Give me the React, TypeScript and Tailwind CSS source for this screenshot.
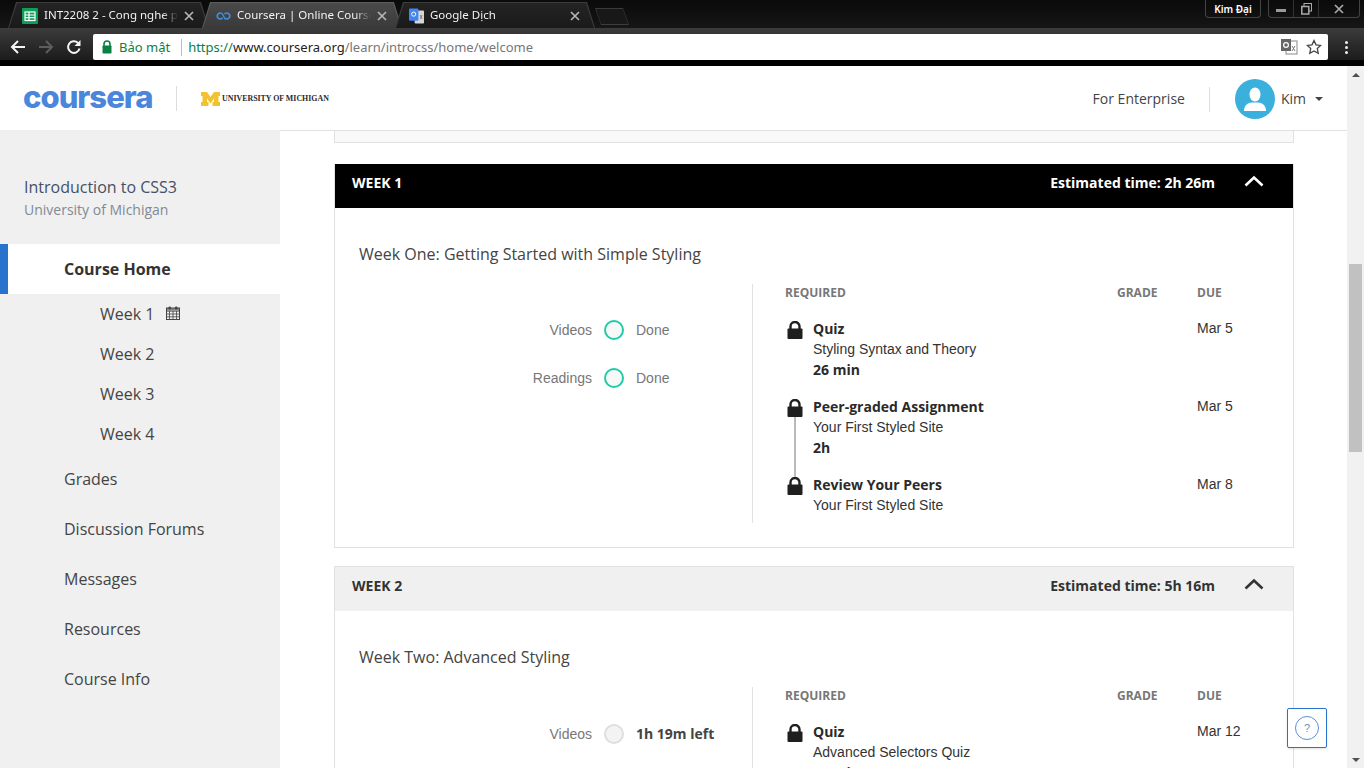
import React from "react";

const OPEN = "font-['Open_Sans',sans-serif]";
const ARIAL = "font-['Liberation_Sans',sans-serif]";

function Lock() {
  return (
    <svg width="16" height="18" viewBox="0 0 16 18" className="block">
      <path d="M3.500 8V5.500a4.500 4.500 0 0 1 9 0V8" fill="none" stroke="#1f1f1f" strokeWidth="2.4" />
      <rect x="0.5" y="7.500" width="15" height="10.500" rx="1" fill="#1f1f1f" />
    </svg>
  );
}

function Chevron({ color }: { color: string }) {
  return (
    <svg width="20" height="12" viewBox="0 0 20 12" className="block">
      <path d="M1.500 10.500 L10 2.500 L18.500 10.500" fill="none" stroke={color} strokeWidth="2.6" />
    </svg>
  );
}

function Calendar() {
  return (
    <svg width="14" height="14" viewBox="0 0 14 14" className="block">
      <rect x="0.5" y="2" width="13" height="11.500" fill="none" stroke="#444" />
      <path d="M0.500 5.200H13.500M0.500 8H13.500M0.500 10.800H13.500M3.500 5V13.500M7 5V13.500M10.500 5V13.500" stroke="#444" strokeWidth="0.8" />
      <rect x="2.500" y="0.500" width="2.400" height="3" rx="1" fill="#444" />
      <rect x="9" y="0.500" width="2.400" height="3" rx="1" fill="#444" />
      <rect x="0.500" y="2" width="13" height="2.600" fill="#444" opacity="0.6" />
    </svg>
  );
}

function CloseX({ color = "#b5b5b5" }: { color?: string }) {
  return (
    <svg width="10" height="10" viewBox="0 0 10 10" className="block shrink-0">
      <path d="M1 1L9 9M9 1L1 9" stroke={color} strokeWidth="1.7" />
    </svg>
  );
}

function SheetsIcon() {
  return (
    <svg width="16" height="16" viewBox="0 0 16 16" className="block shrink-0">
      <rect width="16" height="16" rx="1" fill="#0f9d58" />
      <rect x="3" y="4" width="10" height="8.500" fill="none" stroke="#fff" strokeWidth="1.2" />
      <path d="M3 7H13M3 9.700H13M7 4V12.500" stroke="#fff" strokeWidth="1.2" />
    </svg>
  );
}

function InfinityIcon() {
  return (
    <svg width="15" height="10" viewBox="0 0 16 10" className="block shrink-0">
      <path d="M7 3a3.200 3.200 0 1 0 0 4M9 7a3.200 3.200 0 1 0 0-4" fill="none" stroke="#3f8fdc" strokeWidth="1.8" />
      <path d="M7 3 L9 7" stroke="#3f8fdc" strokeWidth="1.5" />
    </svg>
  );
}

function TranslateIcon({ small }: { small?: boolean }) {
  if (small) {
    return (
      <svg width="18" height="18" viewBox="0 0 18 18" className="block">
        <rect x="6" y="3" width="11" height="13" fill="#fff" stroke="#888" />
        <rect x="1" y="1" width="10" height="12" fill="#666" />
        <circle cx="6" cy="7" r="2.400" fill="none" stroke="#fff" strokeWidth="1.2" />
        <path d="M12 8l3 5M15 8l-3 5" stroke="#777" strokeWidth="1" />
      </svg>
    );
  }
  return (
    <svg width="15" height="16" viewBox="0 0 16 16" className="block shrink-0">
      <rect x="6" y="2" width="10" height="14" rx="1" fill="#d6d6d6" />
      <rect x="0" y="0" width="10" height="13" rx="1" fill="#4285f4" />
      <circle cx="5" cy="6" r="2.200" fill="none" stroke="#fff" strokeWidth="1" />
      <path d="M12 7l2 4M14 7l-2 4" stroke="#777" strokeWidth="1" />
    </svg>
  );
}

function Tab({
  icon,
  label,
  active,
  width,
}: {
  icon: React.ReactNode;
  label: string;
  active?: boolean;
  width: string;
}) {
  return (
    <div
      className={`-mr-[7px] h-[26px] shrink-0 ${width} ${
        active ? "bg-[#5a5a5a]" : "bg-[#3c3c3c]"
      } [clip-path:polygon(0_100%,8px_0,calc(100%-8px)_0,100%_100%)] pt-px`}
    >
      <div
        className={`flex h-full items-center gap-[6px] pl-[14px] pr-[15px] ${
          active ? "bg-gradient-to-b from-[#4a4a4a] to-[#3a3a3a]" : "bg-gradient-to-b from-[#242424] to-[#1a1a1a]"
        } [clip-path:polygon(1px_100%,9px_0,calc(100%-9px)_0,calc(100%-1px)_100%)]`}
      >
        {icon}
        <span className="-mt-[2px] min-w-0 flex-1 overflow-hidden whitespace-nowrap font-['Noto_Sans',sans-serif] text-[11.5px] leading-[16px] text-[#f2f2f2] [mask-image:linear-gradient(to_right,black_88%,transparent)]">
          {label}
        </span>
        <CloseX />
      </div>
    </div>
  );
}

function BrowserChrome() {
  return (
    <div className="shrink-0 bg-black">
      <div className="flex h-[28px] items-end bg-gradient-to-b from-[#0a0a0a] to-[#161616] pl-[8px]">
        <div className="flex items-end">
          <Tab width="w-[201px]" icon={<SheetsIcon />} label="INT2208 2 - Cong nghe p" />
          <Tab width="w-[200px]" icon={<InfinityIcon />} label="Coursera | Online Course" active />
          <Tab width="w-[200px]" icon={<TranslateIcon />} label="Google Dịch" />
          <div className="ml-[7px] mb-[3px] h-[17px] w-[34px] bg-[#3c3c3c] [clip-path:polygon(6px_100%,0_0,calc(100%-6px)_0,100%_100%)] p-px">
            <div className="h-full w-full bg-[#181818] [clip-path:polygon(5px_100%,0_0,calc(100%-5px)_0,100%_100%)]" />
          </div>
        </div>
        <div className="ml-auto flex items-start self-start pr-[4px]">
          <div className="flex h-[18px] w-[56px] items-center justify-center rounded-b-[4px] border-x border-b border-[#444] font-['Noto_Sans',sans-serif] text-[10px] font-semibold leading-none text-white">
            Kim Đại
          </div>
          <div className="ml-[7px] flex h-[18px] w-[92px] items-center rounded-b-[4px] border-x border-b border-[#444] text-[#aaa]">
            <div className="flex h-full w-[25px] items-center justify-center border-r border-[#333]">
              <div className="mt-[4px] h-[3px] w-[10px] bg-[#999]" />
            </div>
            <div className="flex h-full w-[25px] items-center justify-center border-r border-[#333]">
              <svg width="11" height="12" viewBox="0 0 11 12" className="block">
                <rect x="3" y="0.500" width="7.500" height="7.500" fill="none" stroke="#aaa" />
                <rect x="0.800" y="3.500" width="7" height="7.500" fill="#111" stroke="#aaa" strokeWidth="1.5" />
              </svg>
            </div>
            <div className="flex h-full flex-1 items-center justify-center">
              <CloseX color="#aaa" />
            </div>
          </div>
        </div>
      </div>
      <div className="flex h-[32px] items-center bg-gradient-to-b from-[#3c3c3c] to-[#1c1c1c] pt-[6px]">
        <div className="flex w-[93px] shrink-0 items-center pl-[10px]">
          <svg width="16" height="16" viewBox="0 0 16 16" className="block">
            <path d="M15 8H2M8 2L2 8l6 6" fill="none" stroke="#f5f5f5" strokeWidth="2" />
          </svg>
          <svg width="16" height="16" viewBox="0 0 16 16" className="ml-[12px] block">
            <path d="M1 8H14M8 2l6 6-6 6" fill="none" stroke="#5e5e5e" strokeWidth="2" />
          </svg>
          <svg width="16" height="16" viewBox="0 0 16 16" className="ml-[12px] block">
            <path d="M13.500 9.500A5.800 5.800 0 1 1 12 4" fill="none" stroke="#f5f5f5" strokeWidth="2" />
            <path d="M14.500 1v6h-6z" fill="#f5f5f5" />
          </svg>
        </div>
        <div className="flex h-[26px] w-[1235px] items-center rounded-[2px] bg-white pl-[8px] pr-[6px]">
          <svg width="12" height="14" viewBox="0 0 12 14" className="block shrink-0">
            <path d="M3 6V4a3 3 0 0 1 6 0v2" fill="none" stroke="#0b8043" strokeWidth="1.6" />
            <rect x="1.500" y="5.500" width="9" height="8" rx="0.8" fill="#0b8043" />
          </svg>
          <span className="ml-[6px] font-['Noto_Sans',sans-serif] text-[13px] leading-none text-[#0b8043]">Bảo mật</span>
          <div className="ml-[11px] h-[17px] w-px bg-[#bdbdbd]" />
          <span className="ml-[6px] whitespace-nowrap font-['Noto_Sans',sans-serif] text-[13px] leading-none">
            <span className="text-[#0b8043]">https://</span>
            <span className="text-[#222]">www.coursera.org</span>
            <span className="text-[#777]">/learn/introcss/home/welcome</span>
          </span>
          <div className="ml-auto flex items-center gap-[8px]">
            <TranslateIcon small />
            <svg width="16" height="16" viewBox="0 0 16 16" className="block">
              <path d="M8 1.500l2 4.300 4.700.6-3.400 3.200.9 4.700L8 11.900l-4.200 2.400.9-4.700L1.300 6.400 6 5.800z" fill="none" stroke="#444" strokeWidth="1.300" />
            </svg>
          </div>
        </div>
        <div className="flex flex-1 flex-col items-center gap-[2px]">
          <div className="h-[3px] w-[3px] rounded-full bg-[#eee]" />
          <div className="h-[3px] w-[3px] rounded-full bg-[#eee]" />
          <div className="h-[3px] w-[3px] rounded-full bg-[#eee]" />
        </div>
      </div>
      <div className="h-[6px] bg-black" />
    </div>
  );
}

function Header() {
  return (
    <header className="flex h-[64px] shrink-0 items-center bg-white pl-[24px] pr-[24px] pt-[2px]">
      <span className="-ml-[1px] mr-[1px] mb-[6px] w-[128px] whitespace-nowrap font-['Inter',sans-serif] text-[31px] font-extrabold leading-none tracking-[-1px] text-[#4a86dc]">
        coursera
      </span>
      <div className="ml-[24px] mb-[1px] h-[25px] w-px bg-[#dcdcdc]" />
      <div className="ml-[24px] flex items-center">
        <svg width="19" height="14" viewBox="0 0 19 14" className="block shrink-0">
          <path
            d="M0 0H6L9.500 5 13 0H19V4H17.500V10H19V14H11.500V10H13V6.500L9.500 11.500 6 6.500V10H7.500V14H0V10H1.500V4H0Z"
            fill="#f2c230"
          />
        </svg>
        <span className="ml-[2px] whitespace-nowrap font-['Liberation_Serif',serif] text-[7.900px] font-bold leading-none text-[#2a2a2a]">
          UNIVERSITY OF MICHIGAN
        </span>
      </div>
      <span className={`ml-auto ${OPEN} text-[14px] leading-none text-[#444]`}>For Enterprise</span>
      <div className="ml-[24px] h-[25px] w-px bg-[#dcdcdc]" />
      <div className="ml-[25px] flex h-[40px] w-[40px] items-center justify-center rounded-full bg-[#3bb0dd]">
        <svg width="26" height="28" viewBox="0 0 26 28" className="block">
          <ellipse cx="13" cy="9.500" rx="5.500" ry="7" fill="#fff" />
          <path d="M2 26c0-5 3-8 8-8.500h6c5 .5 8 3.500 8 8.500z" fill="#fff" />
        </svg>
      </div>
      <span className={`ml-[6px] ${OPEN} text-[14px] leading-none text-[#444]`}>Kim</span>
      <div className="ml-[9px] h-0 w-0 border-x-[4px] border-t-[4px] border-x-transparent border-t-[#444]" />
    </header>
  );
}

function NavItem({ label }: { label: string }) {
  return (
    <div className={`flex h-[50px] items-center pl-[64px] ${OPEN} text-[16px] leading-none text-[#444]`}>{label}</div>
  );
}

function Sidebar() {
  return (
    <aside className={`w-[280px] shrink-0 bg-[#f0f0f0] ${OPEN}`}>
      <div className="pl-[24px] pt-[46px]">
        <div className="text-[16px] leading-[22px] text-[#445066]">Introduction to CSS3</div>
        <div className="mt-[2px] text-[14px] leading-[20px] text-[#808a96]">University of Michigan</div>
      </div>
      <div className="mt-[24px] flex h-[50px] items-center border-l-[8px] border-[#2a73cc] bg-white pl-[56px] text-[16px] font-bold leading-none text-[#333]">
        Course Home
      </div>
      <div className="pl-[100px]">
        {["Week 1", "Week 2", "Week 3", "Week 4"].map((w, i) => (
          <div key={w} className="flex h-[40px] items-center text-[16px] leading-none text-[#444]">
            {w}
            {i === 0 && (
              <span className="ml-[12px] -mt-[2px]">
                <Calendar />
              </span>
            )}
          </div>
        ))}
      </div>
      <div>
        {["Grades", "Discussion Forums", "Messages", "Resources", "Course Info"].map((n) => (
          <NavItem key={n} label={n} />
        ))}
      </div>
    </aside>
  );
}

type Item = { title: string; sub: string; extra?: string; due: string; line?: boolean };

function ItemRow({ item }: { item: Item }) {
  return (
    <div className="mb-[17px] flex">
      <div className="relative w-[28px] shrink-0 pl-[2px] pt-[2px]">
        <Lock />
        {item.line && <div className="absolute left-[9px] top-[20px] h-[60px] w-[2px] bg-[#bbb]" />}
      </div>
      <div className="flex-1">
        <div className={`${OPEN} text-[14px] font-bold leading-[20px] text-[#2a2a2a]`}>{item.title}</div>
        <div className={`${ARIAL} text-[14px] leading-[20px] text-[#333]`}>{item.sub}</div>
        {item.extra && <div className={`${OPEN} text-[14px] font-bold leading-[21px] text-[#2a2a2a]`}>{item.extra}</div>}
      </div>
      <div className={`w-[96px] shrink-0 ${ARIAL} text-[14px] leading-[18px] text-[#333]`}>{item.due}</div>
    </div>
  );
}

function WeekCard({
  week,
  time,
  title,
  active,
  stats,
  items,
}: {
  week: string;
  time: string;
  title: string;
  active?: boolean;
  stats: { label: string; value: string; done: boolean }[];
  items: Item[];
}) {
  return (
    <section className={active ? "mb-[18px]" : ""}>
      <div
        className={`flex items-center border-x border-[#e1e1e1] pb-[6px] pl-[17px] pr-[29px] ${OPEN} text-[14px] font-bold ${
          active ? "h-[44px] bg-black text-white" : "h-[45px] border-t bg-[#f0f0f0] text-[#333]"
        }`}
      >
        <span className="flex-1 leading-none">{week}</span>
        <span className="leading-none">{time}</span>
        <span className="ml-[29px] -mt-[4px]">
          <Chevron color={active ? "#fff" : "#333"} />
        </span>
      </div>
      <div className="border-x border-b border-[#e1e1e1] bg-white pb-[24px] pt-[35px]">
        <h2 className={`pl-[24px] ${OPEN} text-[16px] font-normal leading-[22px] text-[#444]`}>{title}</h2>
        <div className="mt-[19px] flex">
          <div className={`w-[417px] shrink-0 ${active ? "pt-[36px]" : "pt-[37px]"}`}>
            {stats.map((s) => (
              <div key={s.label} className="mb-[28px] flex h-[20px] items-center">
                <span className={`w-[257px] text-right ${ARIAL} text-[14px] leading-none text-[#777]`}>{s.label}</span>
                <span
                  className={`ml-[12px] h-[20px] w-[20px] rounded-full border-2 ${
                    s.done ? "border-[#1fcca5] bg-[#f8f8f8]" : "border-[#dedede] bg-[#f3f3f3]"
                  }`}
                />
                <span
                  className={`ml-[12px] text-[14px] leading-none ${
                    s.done ? `${ARIAL} text-[#777]` : `${OPEN} font-bold text-[#444]`
                  }`}
                >
                  {s.value}
                </span>
              </div>
            ))}
          </div>
          <div className="flex-1 border-l border-[#e1e1e1] pb-[8px] pl-[32px]">
            <div className={`mb-[17px] flex h-[18px] items-center ${OPEN} text-[12px] font-bold leading-none text-[#777]`}>
              <span className="w-[332px]">REQUIRED</span>
              <span className="w-[80px]">GRADE</span>
              <span>DUE</span>
            </div>
            {items.map((it, i) => (
              <div key={it.title} className={i === items.length - 1 ? "-mb-[17px]" : ""}>
                <ItemRow item={it} />
              </div>
            ))}
          </div>
        </div>
      </div>
    </section>
  );
}

function Content() {
  return (
    <div className="min-w-0 flex-1 overflow-hidden border-t border-[#e1e1e1] bg-white pl-[54px] pr-[53px]">
      <div className="mb-[21px] h-[12px] border-x border-b border-[#e1e1e1] bg-[#f9f9f9]" />
      <WeekCard
        active
        week="WEEK 1"
        time="Estimated time: 2h 26m"
        title="Week One: Getting Started with Simple Styling"
        stats={[
          { label: "Videos", value: "Done", done: true },
          { label: "Readings", value: "Done", done: true },
        ]}
        items={[
          { title: "Quiz", sub: "Styling Syntax and Theory", extra: "26 min", due: "Mar 5" },
          { title: "Peer-graded Assignment", sub: "Your First Styled Site", extra: "2h", due: "Mar 5", line: true },
          { title: "Review Your Peers", sub: "Your First Styled Site", due: "Mar 8" },
        ]}
      />
      <WeekCard
        week="WEEK 2"
        time="Estimated time: 5h 16m"
        title="Week Two: Advanced Styling"
        stats={[{ label: "Videos", value: "1h 19m left", done: false }]}
        items={[{ title: "Quiz", sub: "Advanced Selectors Quiz", extra: "30 min", due: "Mar 12" }]}
      />
    </div>
  );
}

function Scrollbar() {
  return (
    <div className="flex w-[17px] shrink-0 flex-col items-center bg-[#f1f1f1] pt-[7px]">
      <div className="h-0 w-0 border-x-[4px] border-b-[4px] border-x-transparent border-b-[#505050]" />
      <div className="mt-[187px] h-[188px] w-[13px] bg-[#c1c1c1]" />
      <div className="mt-auto mb-[6px] h-0 w-0 border-x-[4px] border-t-[4px] border-x-transparent border-t-[#505050]" />
    </div>
  );
}

export default function App() {
  return (
    <div className="relative flex h-[768px] w-[1364px] flex-col overflow-hidden bg-white">
      <BrowserChrome />
      <div className="flex min-h-0 flex-1">
        <div className="flex min-w-0 flex-1 flex-col">
          <Header />
          <div className="flex min-h-0 flex-1">
            <Sidebar />
            <Content />
          </div>
        </div>
        <Scrollbar />
      </div>
      <button className="absolute left-[1287px] top-[708px] flex h-[40px] w-[40px] items-center justify-center rounded-[2px] border border-[#2a73cc] bg-white shadow-sm">
        <span className="flex h-[24px] w-[24px] items-center justify-center rounded-full border border-[#5a8fd8] font-['Liberation_Sans',sans-serif] text-[11px] leading-none text-[#6a8fc8]">
          ?
        </span>
      </button>
    </div>
  );
}
